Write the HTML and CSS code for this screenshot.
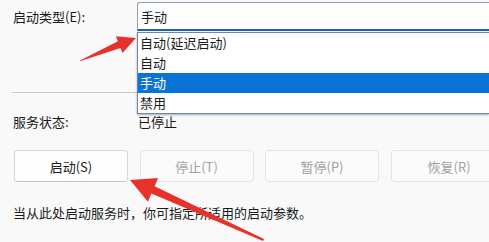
FILE: index.html
```html
<!DOCTYPE html>
<html lang="zh-CN">
<head>
<meta charset="utf-8">
<title>服务属性</title>
<link rel="stylesheet" href="styles.css">
</head>
<body>
<div class="page">
  <div class="row-type">
    <div class="label">启动类型(E):</div>
    <div class="select">手动</div>
  </div>
  <div class="separator"></div>
  <div class="row-status">
    <div class="label">服务状态:</div>
    <div class="value">已停止</div>
  </div>
  <div class="buttons">
    <div class="btn">启动(S)</div>
    <div class="btn disabled">停止(T)</div>
    <div class="btn disabled">暂停(P)</div>
    <div class="btn disabled cut">恢复(R)</div>
  </div>
  <div class="desc">当从此处启动服务时，你可指定所适用的启动参数。</div>
</div>
<div class="listbox">
  <div class="item">自动(延迟启动)</div>
  <div class="item">自动</div>
  <div class="item selected">手动</div>
  <div class="item">禁用</div>
</div>
<svg class="arrows" width="489" height="242" viewBox="0 0 489 242">
  <polygon fill="#e8312b" points="80,60.5 117.9,41.3 115.9,36.2 136,38 122.5,53 120.5,47.9 80.5,61"/>
  <polygon fill="#e8312b" points="264,239 154.6,186.2 158.1,178 130,180 147.9,201.8 151.4,193.6 263,241"/>
</svg>
</body>
</html>
```
FILE: styles.css
```css
html, body {
  margin: 0;
  padding: 0;
}
body {
  width: 489px;
  height: 242px;
  overflow: hidden;
  position: relative;
  background: #f9f9f9;
  font-family: "Noto Sans CJK SC", "Noto Sans", sans-serif;
  font-size: 13px;
  color: #1b1b1b;
}
.page {
  padding: 2px 0 0 13px;
}
.row-type {
  display: flex;
  align-items: stretch;
  height: 29px;
}
.label {
  width: 124px;
  flex: none;
  display: flex;
  align-items: center;
}
.select {
  flex: 1;
  box-sizing: border-box;
  height: 29px;
  border: 1px solid #8ea2b8;
  border-right: none;
  border-bottom: 2px solid #2160a8;
  border-radius: 3px 0 0 0;
  background: #fdfdfd;
  padding-left: 3px;
  display: flex;
  align-items: center;
}
.separator {
  margin-top: 61px;
  margin-left: -1px;
  width: 465px;
  height: 1px;
  background: #c9c9c9;
}
.row-status {
  display: flex;
  margin-top: 19px;
  height: 19px;
  line-height: 19px;
}
.row-status .value {
  padding-left: 1px;
}
.buttons {
  display: flex;
  gap: 11.5px;
  margin-top: 19px;
  padding-left: 1px;
}
.btn {
  flex: none;
  width: 114px;
  height: 32px;
  box-sizing: border-box;
  border: 1px solid #d6d6d6;
  border-bottom-color: #c4c4c4;
  border-radius: 4px;
  background: #fdfdfd;
  display: flex;
  align-items: center;
  justify-content: center;
}
.btn.disabled {
  color: #a2a2a2;
  border-color: #e4e4e4;
  background: #fbfbfb;
}
.btn.cut {
  width: 98px;
  border-right: none;
  border-radius: 4px 0 0 4px;
  justify-content: flex-start;
  padding-left: 36px;
}
.desc {
  margin-top: 21px;
  height: 19px;
  line-height: 19px;
}
.listbox {
  position: absolute;
  left: 137px;
  top: 32px;
  right: 0;
  border: 1px solid #6f87a3;
  border-right: none;
  background: #ffffff;
  box-shadow: 0 1px 2px rgba(60, 80, 110, 0.45);
}
.item {
  height: 20px;
  line-height: 20px;
  padding-left: 2px;
}
.item.selected {
  background: #0a74d6;
  color: #ffffff;
}
.arrows {
  position: absolute;
  left: 0;
  top: 0;
}
```
